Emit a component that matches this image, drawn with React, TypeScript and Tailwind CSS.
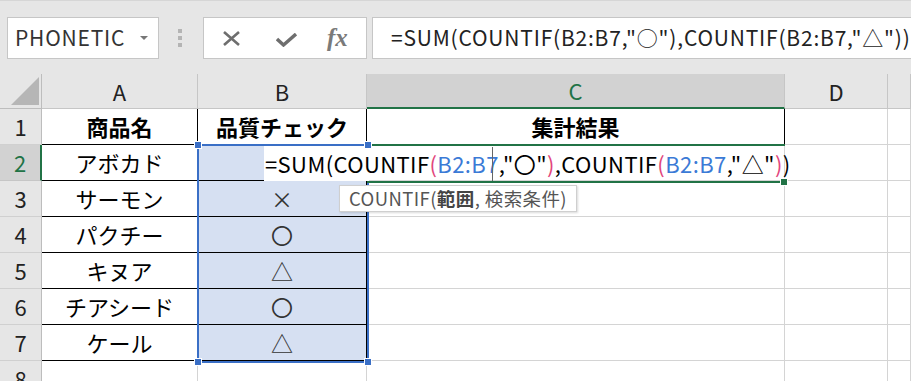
const rows: string[][] = [
  ['商品名', '品質チェック', '集計結果'],
  ['アボカド', '', ''],
  ['サーモン', '×', ''],
  ['パクチー', '〇', ''],
  ['キヌア', '△', ''],
  ['チアシード', '〇', ''],
  ['ケール', '△', ''],
  ['', '', ''],
];

const cols = ['A', 'B', 'C', 'D', ''];

function Toolbar() {
  return (
    <div className="flex h-[74px] items-start border-t border-[#d6d6d6] bg-[#e6e6e6] pt-[16px]">
      {/* name box */}
      <div className="ml-[7px] flex h-[42px] w-[152px] items-center justify-between border border-[#c6c6c6] bg-white pl-[7px] pr-[10px]">
        <span className="text-[21px] tracking-[0.8px] text-[#333]">PHONETIC</span>
        <svg width="8" height="5" viewBox="0 0 8 5">
          <path d="M0 0 L8 0 L4 4 Z" fill="#777" />
        </svg>
      </div>
      {/* grip */}
      <div className="ml-[19px] mt-[12px] flex flex-col gap-[3px]">
        <span className="h-[4px] w-[4px] bg-[#b4b4b4]" />
        <span className="h-[4px] w-[4px] bg-[#b4b4b4]" />
        <span className="h-[4px] w-[4px] bg-[#b4b4b4]" />
      </div>
      {/* cancel / enter / fx */}
      <div className="ml-[21px] flex h-[42px] w-[164px] items-center border border-[#c6c6c6] bg-white">
        <svg className="ml-[18px]" width="19" height="15" viewBox="0 0 19 15">
          <path d="M2 1 L17 14 M17 1 L2 14" stroke="#6e6e6e" strokeWidth="2.6" />
        </svg>
        <svg className="ml-[35px] mt-[4px]" width="21" height="14" viewBox="0 0 21 14">
          <path d="M1 6 L7.5 12 L20 1" stroke="#6e6e6e" strokeWidth="3.4" fill="none" />
        </svg>
        <span className="ml-[30px] font-['Liberation_Serif',serif] text-[25px] font-bold italic text-[#7a7a7a]">fx</span>
      </div>
      {/* formula bar */}
      <div className="ml-[5px] flex h-[42px] flex-1 items-center overflow-hidden whitespace-nowrap border border-r-0 border-[#c6c6c6] bg-white pl-[18px] text-[21px] tracking-[0.8px] text-[#222]">
        =SUM(COUNTIF(B2:B7,"○"),COUNTIF(B2:B7,"△"))
      </div>
    </div>
  );
}

function Formula() {
  const pink = 'text-[#e2457c]';
  const blue = 'text-[#3b7ad6]';
  return (
    <span className="whitespace-nowrap text-[22px] tracking-[0.4px] text-black">
      =SUM(COUNTIF<span className={pink}>(</span>
      <span className={blue}>B2:B7</span>,"〇"<span className={pink}>)</span>,COUNTIF
      <span className={pink}>(</span>
      <span className={blue}>B2:B7</span>,"△"<span className={pink}>)</span>)
    </span>
  );
}

function Sheet() {
  return (
    <div className="relative grid grid-cols-[42px_156px_169px_418px_103px_1fr] grid-rows-[35px_repeat(8,36px)] bg-white">
      {/* corner */}
      <div className="flex items-end justify-end border-r border-b border-[#bdbdbd] bg-[#e6e6e6] pr-[2px] pb-[3px]">
        <svg width="28" height="28" viewBox="0 0 28 28">
          <path d="M28 0 L28 28 L0 28 Z" fill="#b6b6b6" />
        </svg>
      </div>
      {cols.map((c, i) =>
        c === 'C' ? (
          <div
            key={i}
            className="flex items-center justify-center border-r border-b-2 border-r-[#c6c6c6] border-b-[#217346] bg-[#d2d2d2] text-[22px] text-[#217346]"
          >
            {c}
          </div>
        ) : (
          <div
            key={i}
            className="flex items-center justify-center border-r border-b border-[#c6c6c6] bg-[#e6e6e6] text-[22px] text-[#222]"
          >
            {c}
          </div>
        ),
      )}
      {rows.map((r, i) => {
        const n = i + 1;
        return [
          n === 2 ? (
            <div
              key={`h${n}`}
              className="flex items-center justify-center border-r-2 border-b border-r-[#217346] border-b-[#c6c6c6] bg-[#d2d2d2] text-[22px] text-[#217346]"
            >
              {n}
            </div>
          ) : (
            <div
              key={`h${n}`}
              className="flex items-center justify-center border-r border-b border-r-[#bdbdbd] border-b-[#d0d0d0] bg-[#e6e6e6] text-[22px] text-[#222]"
            >
              {n}
            </div>
          ),
          ...[0, 1, 2, 3, 4].map((ci) => {
            const inTable = (n <= 7 && ci < 2) || (n === 1 && ci === 2);
            const selected = ci === 1 && n >= 2 && n <= 7;
            return (
              <div
                key={`c${n}-${ci}`}
                className={
                  'flex items-center justify-center border-r border-b text-[22px] ' +
                  (inTable ? 'border-black ' : 'border-[#d4d4d4] ') +
                  (selected ? 'bg-[#d6e0f2] text-[#333] ' : 'text-black ') +
                  (n === 1 ? 'font-bold' : '')
                }
              >
                {r[ci] ?? ''}
              </div>
            );
          }),
        ];
      })}

      {/* selection B2:B7 */}
      <div className="absolute left-[197px] top-[70px] h-[219px] w-[172px] border-2 border-[#3a6fc6]" />

      {/* in-cell edit C2, spilling left over B2 */}
      <div className="absolute left-[264px] top-[72px] h-[35px] w-[105px] bg-white" />
      <div className="absolute left-[367px] top-[70px] h-[2px] w-[418px] bg-[#217346]" />
      <div className="absolute left-[367px] top-[107px] h-[2px] w-[413px] bg-[#217346]" />
      <div className="absolute left-[780px] top-[104px] h-[8px] w-[8px] border border-white bg-[#217346]" />
      <div className="absolute left-[265px] top-[71px] flex h-[36px] items-center">
        <Formula />
      </div>
      <div className="absolute left-[492px] top-[73px] h-[34px] w-[1px] bg-[#666]" />

      {/* selection handles */}
      <div className="absolute left-[194px] top-[67px] h-[8px] w-[8px] border border-white bg-[#3a6fc6]" />
      <div className="absolute left-[364px] top-[67px] h-[8px] w-[8px] border border-white bg-[#3a6fc6]" />
      <div className="absolute left-[194px] top-[284px] h-[8px] w-[8px] border border-white bg-[#3a6fc6]" />
      <div className="absolute left-[364px] top-[284px] h-[8px] w-[8px] border border-white bg-[#3a6fc6]" />

      {/* function tooltip */}
      <div className="absolute left-[339px] top-[111px] flex h-[27px] w-[238px] items-center whitespace-nowrap border border-[#cfcfcf] bg-white pl-[9px] text-[18.5px] tracking-[0.4px] text-[#555] shadow-[1px_1px_2px_rgba(0,0,0,0.15)]">
        COUNTIF(<b className="font-bold text-[#444]">範囲</b>, 検索条件)
      </div>
    </div>
  );
}

export default function App() {
  return (
    <div className="h-[381px] w-[911px] overflow-hidden bg-white font-['Noto_Sans_CJK_JP','Noto_Sans',sans-serif]">
      <Toolbar />
      <Sheet />
    </div>
  );
}
